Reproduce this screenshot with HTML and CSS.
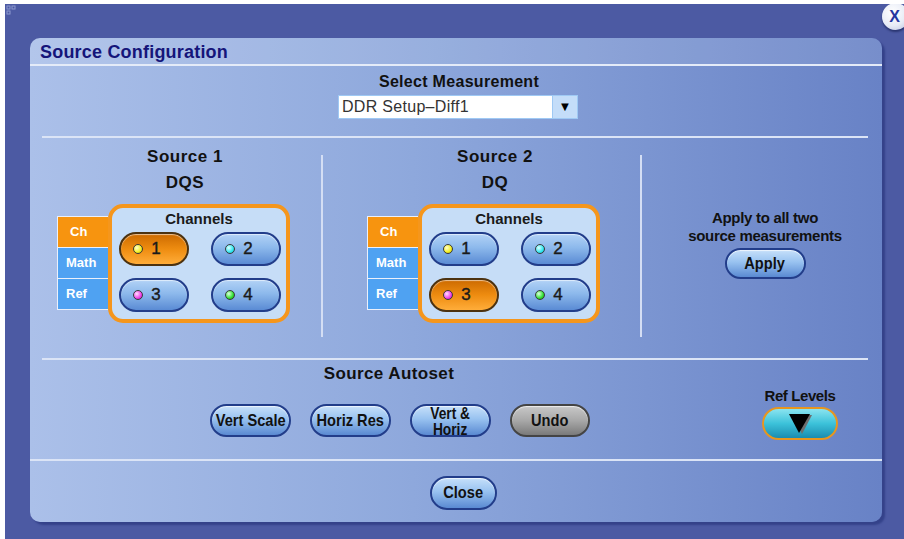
FILE: index.html
```html
<!DOCTYPE html>
<html lang="en">
<head>
  <meta charset="UTF-8">
  <title>Source Configuration</title>
  <link rel="stylesheet" href="styles.css">
</head>
<body>
  <div class="screen">
    <svg class="corner-mark" width="14" height="14" viewBox="0 0 14 14">
      <rect x="1" y="1" width="3" height="3" fill="none" stroke="#8d99cf" stroke-width="1"/>
      <rect x="6" y="1" width="3" height="3" fill="none" stroke="#8d99cf" stroke-width="1"/>
      <rect x="1" y="6" width="3" height="3" fill="none" stroke="#8d99cf" stroke-width="1"/>
    </svg>
    <div class="x-btn">X</div>

    <div class="panel">
      <div class="title">Source Configuration</div>

      <div class="measure">
        <div class="label">Select Measurement</div>
        <div class="select">
          <span class="select-text">DDR Setup&ndash;Diff1</span>
          <span class="select-arrow">&#9660;</span>
        </div>
      </div>

      <div class="sep"></div>

      <div class="sources">
        <div class="source src1">
          <div class="src-head">Source 1</div>
          <div class="src-sig">DQS</div>
          <div class="group">
            <div class="tabs">
              <div class="tab active">Ch</div>
              <div class="tab">Math</div>
              <div class="tab">Ref</div>
            </div>
            <div class="chbox">
              <div class="chbox-title">Channels</div>
              <div class="ch-grid">
                <div class="ch-btn on"><span class="dot yellow"></span>1</div>
                <div class="ch-btn"><span class="dot cyan"></span>2</div>
                <div class="ch-btn"><span class="dot magenta"></span>3</div>
                <div class="ch-btn"><span class="dot green"></span>4</div>
              </div>
            </div>
          </div>
        </div>

        <div class="vline"></div>

        <div class="source src2">
          <div class="src-head">Source 2</div>
          <div class="src-sig">DQ</div>
          <div class="group">
            <div class="tabs">
              <div class="tab active">Ch</div>
              <div class="tab">Math</div>
              <div class="tab">Ref</div>
            </div>
            <div class="chbox">
              <div class="chbox-title">Channels</div>
              <div class="ch-grid">
                <div class="ch-btn"><span class="dot yellow"></span>1</div>
                <div class="ch-btn"><span class="dot cyan"></span>2</div>
                <div class="ch-btn on"><span class="dot magenta"></span>3</div>
                <div class="ch-btn"><span class="dot green"></span>4</div>
              </div>
            </div>
          </div>
        </div>

        <div class="vline"></div>

        <div class="apply-col">
          <div class="apply-text">Apply to all two<br>source measurements</div>
          <div class="pill apply-btn"><span class="cond">Apply</span></div>
        </div>
      </div>

      <div class="sep"></div>

      <div class="autoset">
        <div class="autoset-main">
          <div class="autoset-head">Source Autoset</div>
          <div class="autoset-btns">
            <div class="pill"><span class="cond">Vert Scale</span></div>
            <div class="pill"><span class="cond">Horiz Res</span></div>
            <div class="pill two-line"><span class="cond">Vert &amp;<br>Horiz</span></div>
            <div class="pill gray"><span class="cond">Undo</span></div>
          </div>
        </div>
        <div class="ref-levels">
          <div class="ref-label">Ref Levels</div>
          <div class="ref-btn">
            <svg width="28" height="24" viewBox="0 0 28 24">
              <polygon points="6,3 26,3 16,22" fill="#6e6e6e"/>
              <polygon points="3,2 24,2 13,21" fill="#000"/>
            </svg>
          </div>
        </div>
      </div>

      <div class="sep full"></div>

      <div class="close-row">
        <div class="pill close-btn"><span class="cond">Close</span></div>
      </div>
    </div>
  </div>
</body>
</html>
```

FILE: styles.css
```css
* {
  box-sizing: border-box;
}
body {
  margin: 0;
  background: #ffffff;
  font-family: 'Liberation Sans', Arial, sans-serif;
}
.screen {
  position: relative;
  margin: 4px 0 0 5px;
  width: 899px;
  height: 535px;
  background: #4c5aa3;
  padding: 34px 0 0 25px;
  overflow: hidden;
}
.corner-mark {
  position: absolute;
  left: 1px;
  top: 1px;
}
.x-btn {
  position: absolute;
  left: 877px;
  top: -1px;
  width: 27px;
  height: 27px;
  border-radius: 50%;
  background: radial-gradient(circle at 40% 35%, #ffffff 0, #e8ecf6 55%, #b8c0dc 100%);
  box-shadow: 0 2px 2px rgba(20, 30, 80, 0.6);
  color: #2536a0;
  font-weight: 700;
  font-size: 16px;
  line-height: 27px;
  text-align: center;
  padding-right: 2px;
}

.panel {
  width: 852px;
  height: 484px;
  border-radius: 10px;
  background: linear-gradient(90deg, #abc0e9 0%, #8ea8dc 45%, #6882c6 100%);
  box-shadow: 3px 3px 2px #34428a;
  overflow: hidden;
}
.title {
  height: 28px;
  padding: 4px 0 0 10px;
  background: rgba(255, 255, 255, 0.1);
  border-bottom: 2px solid #e4ebf8;
  color: #15157a;
  font-weight: 700;
  font-size: 18px;
  letter-spacing: 0.2px;
}

.measure {
  height: 70px;
  padding-top: 7px;
  display: flex;
  flex-direction: column;
  align-items: center;
}
.label {
  font-weight: 700;
  font-size: 16px;
  line-height: 18px;
  letter-spacing: 0.3px;
  color: #111;
  padding-left: 6px;
}
.select {
  margin-top: 4px;
  margin-left: 4px;
  width: 240px;
  height: 24px;
  display: flex;
  border: 1px solid #9fc9f4;
  background: #ffffff;
}
.select-text {
  flex: 1;
  padding-left: 3px;
  font-size: 16px;
  line-height: 22px;
  letter-spacing: 0.3px;
  color: #333;
}
.select-arrow {
  width: 25px;
  background: #c4ddf9;
  border-left: 1px solid #9fc9f4;
  text-align: center;
  font-size: 13px;
  line-height: 22px;
  color: #000;
}

.sep {
  height: 2px;
  margin: 0 14px 0 12px;
  background: #dbe4f6;
}
.sep.full {
  margin: 0;
}

.sources {
  height: 220px;
  display: flex;
  padding-left: 12px;
}
.source {
  padding-top: 9px;
}
.src1 {
  width: 279px;
  padding-left: 15px;
}
.src2 {
  width: 317px;
  padding-left: 44px;
}
.src-head,
.src-sig {
  width: 232px;
  padding-left: 24px;
  text-align: center;
  font-weight: 700;
  font-size: 17px;
  line-height: 20px;
  letter-spacing: 0.5px;
  color: #111;
}
.src-sig {
  margin-top: 6px;
}
.vline {
  width: 2px;
  margin: 17px 0 21px;
  background: #d4def4;
}

.group {
  margin-top: 11px;
  display: flex;
  align-items: flex-start;
}
.tabs {
  margin-top: 12px;
  width: 51px;
  padding: 1px 0 1px 1px;
  background: #eaf0fb;
  display: flex;
  flex-direction: column;
  gap: 1px;
}
.tab {
  height: 30px;
  background: #4fa2f2;
  color: #ffffff;
  font-weight: 700;
  font-size: 13px;
  line-height: 30px;
  padding-left: 8px;
}
.tab.active {
  background: #f7940f;
  padding-left: 12px;
}
.chbox {
  width: 182px;
  height: 119px;
  border: 4px solid #f5961c;
  border-radius: 15px;
  background: #c6ddf7;
  padding: 2px 0 0 7px;
}
.chbox-title {
  text-align: center;
  padding-right: 7px;
  font-weight: 700;
  font-size: 15px;
  line-height: 18px;
  color: #1a1a1a;
}
.ch-grid {
  margin-top: 4px;
  display: grid;
  grid-template-columns: 70px 70px;
  column-gap: 22px;
  row-gap: 12px;
}
.ch-btn {
  height: 34px;
  border-radius: 17px;
  border: 2px solid #223d8a;
  background: linear-gradient(#b2d2f6 0%, #8db9ec 45%, #5a8bd4 100%);
  box-shadow: inset 0 1px 1px rgba(255, 255, 255, 0.6);
  display: flex;
  align-items: center;
  justify-content: center;
  gap: 8px;
  padding-right: 14px;
  font-size: 17px;
  color: #1a1a1a;
  -webkit-text-stroke: 0.4px #1a1a1a;
}
.ch-btn.on {
  border-color: #4c3210;
  background: linear-gradient(#cc6a00 0%, #ee8c10 50%, #ffad3a 100%);
}
.dot {
  width: 10px;
  height: 10px;
  border-radius: 50%;
  border: 1px solid #3a3a3a;
}
.dot.yellow { background: radial-gradient(circle at 35% 35%, #ffffd0, #f4f020 60%, #b0a800); }
.dot.cyan { background: radial-gradient(circle at 35% 35%, #e0ffff, #30e8f0 60%, #10a0b0); }
.dot.magenta { background: radial-gradient(circle at 35% 35%, #ffe0ff, #f040e8 60%, #a010a0); }
.dot.green { background: radial-gradient(circle at 35% 35%, #e0ffe0, #30e030 60%, #108010); }

.apply-col {
  flex: 1;
  padding-top: 71px;
  padding-left: 6px;
  display: flex;
  flex-direction: column;
  align-items: center;
}
.apply-text {
  text-align: center;
  font-weight: 700;
  font-size: 15px;
  line-height: 18px;
  letter-spacing: -0.3px;
  color: #111;
}

.pill {
  width: 81px;
  height: 33px;
  border-radius: 17px;
  border: 2px solid #223d8a;
  background: linear-gradient(#c6e0fa 0%, #98c2f0 45%, #5a8ad2 100%);
  box-shadow: inset 0 1px 1px rgba(255, 255, 255, 0.7);
  display: flex;
  align-items: center;
  justify-content: center;
  text-align: center;
  font-weight: 700;
  font-size: 17px;
  line-height: 16px;
  color: #111;
  white-space: nowrap;
}
.cond {
  display: inline-block;
  transform: scaleX(0.86);
}
.apply-btn {
  margin-top: 3px;
  height: 31px;
}
.two-line {
  font-size: 16px;
  line-height: 16px;
  padding-top: 2px;
}
.pill.gray {
  width: 80px;
  border-color: #444;
  background: linear-gradient(#c8c8c8 0%, #a8a8a8 50%, #7a7a7a 100%);
}

.autoset {
  height: 99px;
  display: flex;
}
.autoset-main {
  margin-left: 138px;
  width: 442px;
  padding-top: 5px;
}
.autoset-head {
  text-align: center;
  font-weight: 700;
  font-size: 17px;
  line-height: 18px;
  letter-spacing: 0.4px;
  color: #111;
}
.autoset-btns {
  margin-top: 21px;
  padding-left: 42px;
  display: flex;
  gap: 19px;
}
.ref-levels {
  margin-left: 152px;
  width: 76px;
  padding-top: 27px;
}
.ref-label {
  text-align: center;
  font-weight: 700;
  font-size: 15px;
  line-height: 18px;
  letter-spacing: -0.4px;
  color: #111;
}
.ref-btn {
  margin-top: 2px;
  height: 33px;
  border-radius: 17px;
  border: 2px solid #e8961e;
  background: linear-gradient(#8ae4f0 0%, #3cc2da 50%, #1a8cb0 100%);
  display: flex;
  align-items: center;
  justify-content: center;
}

.close-row {
  padding: 15px 0 0 400px;
}
.close-btn {
  width: 67px;
  height: 34px;
}
```
